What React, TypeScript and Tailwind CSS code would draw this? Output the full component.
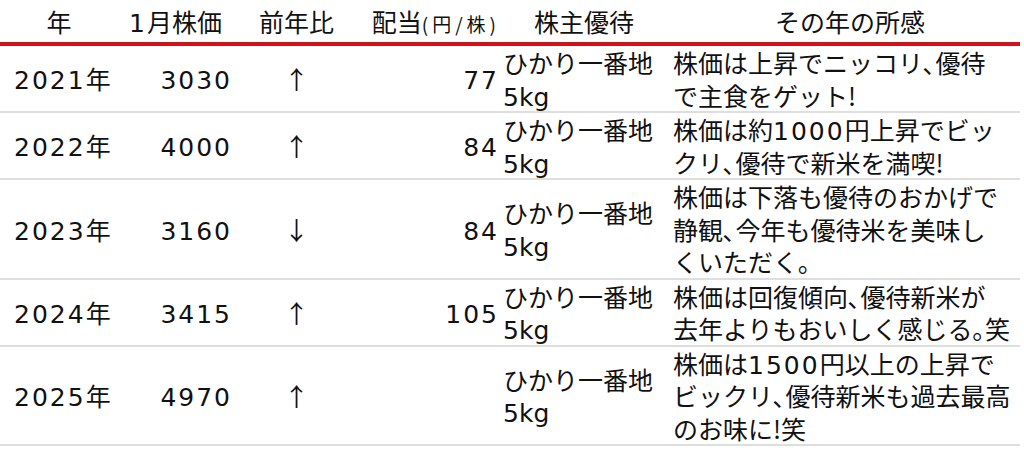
const rows = [
  {
    year: '2021',
    price: '3030',
    diff: '↑',
    div: '77',
    lines: [['株価は上昇でニッコリ､優待'], ['で主食をゲット!']],
  },
  {
    year: '2022',
    price: '4000',
    diff: '↑',
    div: '84',
    lines: [['株価は約', '1000', '円上昇でビッ'], ['クリ､優待で新米を満喫!']],
  },
  {
    year: '2023',
    price: '3160',
    diff: '↓',
    div: '84',
    lines: [['株価は下落も優待のおかげで'], ['静観､今年も優待米を美味し'], ['くいただく｡']],
  },
  {
    year: '2024',
    price: '3415',
    diff: '↑',
    div: '105',
    lines: [['株価は回復傾向､優待新米が'], ['去年よりもおいしく感じる｡笑']],
  },
  {
    year: '2025',
    price: '4970',
    diff: '↑',
    div: '',
    lines: [['株価は', '1500', '円以上の上昇で'], ['ビックリ､優待新米も過去最高'], ['のお味に!笑']],
  },
];

function Num({ children }: { children: string }) {
  return <span className="font-['DejaVu_Sans',sans-serif] tracking-[2px] leading-[0]">{children}</span>;
}

export default function App() {
  return (
    <div className="w-[1024px] h-[462px] bg-white text-[#111] font-['Noto_Sans_CJK_JP',sans-serif] text-[25px] leading-[32.5px] overflow-hidden">
      <table className="w-[1020px] table-fixed border-collapse">
        <colgroup>
          <col className="w-[118px]" />
          <col className="w-[127px]" />
          <col className="w-[103px]" />
          <col className="w-[152px]" />
          <col className="w-[168px]" />
          <col className="w-[352px]" />
        </colgroup>
        <thead>
          <tr className="h-[44px] border-b-4 border-[#d0121b]">
            <th className="font-normal text-center align-middle">年</th>
            <th className="font-normal text-center align-middle pr-3 whitespace-nowrap">
              <Num>1</Num>月株価
            </th>
            <th className="font-normal text-center align-middle">前年比</th>
            <th className="font-normal text-right align-middle whitespace-nowrap">
              配当<span className="text-[19px] tracking-[4px] leading-[0]">(円/株)</span>
            </th>
            <th className="font-normal text-center align-middle">株主優待</th>
            <th className="font-normal text-center align-middle pl-3">その年の所感</th>
          </tr>
        </thead>
        <tbody>
          {rows.map((r) => (
            <tr key={r.year} className="border-b-2 border-[#dedede]">
              <td className="align-middle pl-[14px] whitespace-nowrap">
                <Num>{r.year}</Num>年
              </td>
              <td className="align-middle text-right pr-[13px]">
                <Num>{r.price}</Num>
              </td>
              <td className="align-middle text-center">{r.diff}</td>
              <td className="align-middle text-right pr-[1px]">
                <Num>{r.div}</Num>
              </td>
              <td className="align-middle pl-[3px] whitespace-nowrap">
                ひかり一番地
                <br />
                <span className="font-['DejaVu_Sans',sans-serif] leading-[0]">5kg</span>
              </td>
              <td className="align-middle pl-[5px] whitespace-nowrap">
                {r.lines.map((l, i) => (
                  <div key={i}>
                    {l.map((part, j) => (j === 1 ? <Num key={j}>{part}</Num> : <span key={j}>{part}</span>))}
                  </div>
                ))}
              </td>
            </tr>
          ))}
        </tbody>
      </table>
    </div>
  );
}
